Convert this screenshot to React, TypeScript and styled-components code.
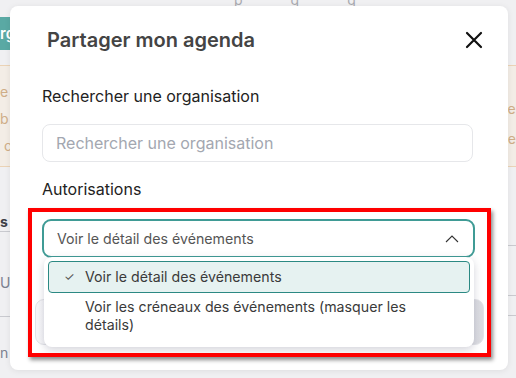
import React, { FC } from 'react'
import styled, { createGlobalStyle } from 'styled-components'

const GlobalStyle = createGlobalStyle`
	html, body {
		margin: 0;
		padding: 0;
		width: 516px;
		height: 378px;
		overflow: hidden;
		background: #f0f0f2;
		font-family: Inter, 'Liberation Sans', sans-serif;
	}
`

const Page = styled.div`
	position: relative;
	width: 516px;
	height: 378px;
	overflow: hidden;
	background: #f0f0f2;
`

// --- page behind the dialog ---
const TopText = styled.div`
	height: 6px;
	overflow: hidden;
	padding-left: 234px;
	display: flex;
	gap: 48px;
	font-size: 14px;
	line-height: 0px;
	color: #a9aab0;
	white-space: nowrap;
`

const OrgButton = styled.div`
	margin-top: 11px;
	width: 10px;
	height: 33px;
	background: #5aa9a4;
	color: #ffffff;
	font-size: 15px;
	font-weight: 600;
	display: flex;
	align-items: center;
	overflow: hidden;
`

const Notice = styled.div`
	margin-top: 15px;
	height: 102px;
	box-sizing: border-box;
	border-top: 1px solid #ebd3b6;
	border-bottom: 1px solid #ebd3b6;
	background: #f3ede6;
	color: #cfae88;
	font-size: 14px;
	display: flex;
	justify-content: space-between;
	padding-top: 17px;
`

const NoticeCol = styled.div<{ $right?: boolean }>`
	display: flex;
	flex-direction: column;
	gap: ${(p) => (p.$right ? '12px' : '9px')};
	padding-top: ${(p) => (p.$right ? '17px' : '0')};
	line-height: 18px;
`

const Tables = styled.div`
	display: flex;
	justify-content: space-between;
	margin-top: 45px;
`

const TableCol = styled.div<{ $width: number }>`
	width: ${(p) => p.$width}px;
	display: flex;
	flex-direction: column;
`

const Cell = styled.div<{ $h: number; $bold?: boolean; $line?: boolean }>`
	height: ${(p) => p.$h}px;
	flex: none;
	box-sizing: border-box;
	border-bottom: ${(p) => (p.$line ? '1px solid #c9cacf' : 'none')};
	font-size: 14px;
	font-weight: ${(p) => (p.$bold ? 700 : 400)};
	color: ${(p) => (p.$bold ? '#3f4148' : '#7c8190')};
	display: flex;
	align-items: center;
	white-space: nowrap;
`

// --- dialog ---
const Dialog = styled.div`
	position: absolute;
	left: 10px;
	top: 6px;
	width: 498px;
	height: 364px;
	background: #ffffff;
	border-radius: 8px;
	box-shadow: 0 1px 6px rgba(0, 0, 0, 0.08);
	padding: 22px 34px 0 32px;
	box-sizing: border-box;
	display: flex;
	flex-direction: column;
`

const Header = styled.div`
	display: flex;
	align-items: center;
	justify-content: space-between;
	padding-left: 5px;
`

const Title = styled.h2`
	margin: 0;
	font-size: 20px;
	line-height: 24px;
	font-weight: 600;
	color: #444444;
`

const CloseButton = styled.button`
	border: none;
	background: none;
	padding: 0;
	margin-right: -9px;
	width: 18px;
	height: 18px;
	display: flex;
	cursor: pointer;
`

const Label = styled.div<{ $top: number }>`
	margin-top: ${(p) => p.$top}px;
	font-size: 16px;
	line-height: 20px;
	color: #222222;
`

const SearchInput = styled.input`
	margin-top: 18px;
	width: 431px;
	height: 38px;
	box-sizing: border-box;
	border: 1px solid #e6e7ea;
	border-radius: 8px;
	padding: 0 13px;
	font-family: inherit;
	font-size: 16px;
	color: #333;
	outline: none;
	&::placeholder {
		color: #a3a7b0;
	}
`

const SelectWrap = styled.div`
	position: relative;
	margin-top: 20px;
	width: 433px;
`

const SelectBox = styled.div`
	height: 39px;
	box-sizing: border-box;
	border: 2px solid #3f9b95;
	border-radius: 9px;
	padding: 0 14px 0 13px;
	display: flex;
	align-items: center;
	justify-content: space-between;
	font-size: 14.2px;
	color: #555555;
	background: #fff;
`

const Menu = styled.div`
	position: absolute;
	left: 2px;
	top: 38px;
	width: 430px;
	background: #ffffff;
	border-radius: 8px;
	box-shadow: 0 3px 8px rgba(60, 60, 90, 0.22);
	padding: 4px;
	box-sizing: border-box;
	z-index: 2;
`

const Option = styled.div<{ $selected?: boolean }>`
	display: flex;
	align-items: flex-start;
	padding: ${(p) => (p.$selected ? '6px 10px' : '4px 10px 8px')};
	border: 1px solid ${(p) => (p.$selected ? '#2b8983' : 'transparent')};
	background: ${(p) => (p.$selected ? '#e6f2f1' : 'transparent')};
	border-radius: 4px;
	font-size: 14.2px;
	line-height: 18px;
	color: #3a3a3a;
`

const Check = styled.span`
	width: 26px;
	flex: none;
	padding-left: 5px;
	box-sizing: border-box;
	color: #555;
	font-size: 12px;
`

const Footer = styled.div`
	margin-top: 41px;
	margin-left: -7px;
	width: 449px;
	height: 46px;
	border: 1px solid #e2e3e7;
	border-radius: 9px;
	background: linear-gradient(90deg, #f7f7f9 0%, #dcdde2 100%);
	box-sizing: border-box;
`

const Highlight = styled.div`
	position: absolute;
	left: 28px;
	top: 208px;
	width: 463px;
	height: 149px;
	box-sizing: border-box;
	border: 4px solid #ff0000;
	box-shadow: 2px 3px 4px rgba(0, 0, 0, 0.45);
	pointer-events: none;
	z-index: 5;
`

const options = [
	'Voir le détail des événements',
	'Voir les créneaux des événements (masquer les détails)',
]

const App: FC = () => {
	return (
		<Page>
			<GlobalStyle />
			<TopText>
				<span>p</span>
				<span>g</span>
				<span>g</span>
			</TopText>
			<OrgButton>rg</OrgButton>
			<Notice>
				<NoticeCol>
					<span>e c</span>
					<span>b</span>
					<span>&nbsp;c</span>
				</NoticeCol>
				<NoticeCol $right>
					<span>ne</span>
					<span>de</span>
				</NoticeCol>
			</Notice>
			<Tables>
				<TableCol $width={27}>
					<Cell $h={20} $bold $line>s</Cell>
					<Cell $h={32} />
					<Cell $h={36}>UL</Cell>
					<Cell $h={17} $line />
					<Cell $h={70}>n</Cell>
				</TableCol>
				<TableCol $width={20}>
					<Cell $h={34} $line />
					<Cell $h={50} $line />
					<Cell $h={20} $line />
				</TableCol>
			</Tables>

			<Dialog>
				<Header>
					<Title>Partager mon agenda</Title>
					<CloseButton aria-label="Fermer">
						<svg width="18" height="18" viewBox="0 0 18 18">
							<path d="M2 2L16 16M16 2L2 16" stroke="#111" strokeWidth="2.2" strokeLinecap="round" />
						</svg>
					</CloseButton>
				</Header>
				<Label $top={34}>Rechercher une organisation</Label>
				<SearchInput placeholder="Rechercher une organisation" />
				<Label $top={17}>Autorisations</Label>
				<SelectWrap>
					<SelectBox>
						<span>{options[0]}</span>
						<svg width="14" height="8" viewBox="0 0 14 8">
							<path d="M1 7L7 1L13 7" stroke="#333" strokeWidth="1.1" fill="none" />
						</svg>
					</SelectBox>
					<Menu>
						{options.map((o, i) => (
							<Option key={i} $selected={i === 0}>
								<Check>{i === 0 ? '✓' : ''}</Check>
								<span>{o}</span>
							</Option>
						))}
					</Menu>
				</SelectWrap>
				<Footer />
			</Dialog>
			<Highlight />
		</Page>
	)
}

export default App
